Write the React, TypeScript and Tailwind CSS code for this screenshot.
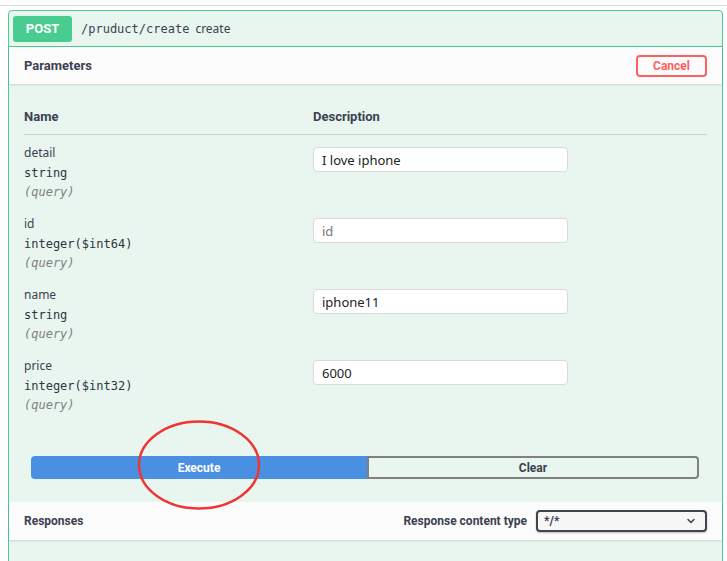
import { ChevronDown } from 'lucide-react';

const params = [
  { name: 'detail', type: 'string', value: 'I love iphone', placeholder: '' },
  { name: 'id', type: 'integer($int64)', value: '', placeholder: 'id' },
  { name: 'name', type: 'string', value: 'iphone11', placeholder: '' },
  { name: 'price', type: 'integer($int32)', value: '6000', placeholder: '' },
];

const ui = "font-['Roboto',sans-serif]";
const mono = "font-['DejaVu_Sans_Mono',monospace]";

export default function App() {
  return (
    <div className={`h-[561px] w-[727px] overflow-hidden bg-white ${ui} text-[#3b4151]`}>
      <div className="h-[5px]" />
      <div className="border-t border-[#d8d8d8]" />

      {/* Operation block */}
      <div className="relative mt-[4px] ml-[8px] mr-[4px] rounded-[4px] border border-[#49cc90] bg-[#e8f6ef] h-[600px]">
        {/* Summary */}
        <div className="flex items-center h-[36px] border-b border-[#49cc90] pl-[4px]">
          <div className="w-[59px] h-[26px] rounded-[3px] bg-[#49cc90] text-white text-[13px] font-bold flex items-center justify-center">
            POST
          </div>
          <span className={`ml-[9px] ${mono} text-[12px] text-[#3b4151]`}>/pruduct/create</span>
          <span className="ml-[6px] text-[12px] font-['Noto_Sans',sans-serif] text-[#3b4151]">create</span>
        </div>

        {/* Parameters header */}
        <div className="flex items-center justify-between h-[37px] bg-[#fcfcfc] shadow-[0_1px_2px_rgba(0,0,0,0.12)] pl-[15px] pr-[15px]">
          <span className="text-[13px] font-bold">Parameters</span>
          <button className="w-[71px] h-[22px] rounded-[4px] border-2 border-[#ff6060] text-[#ff6060] text-[12px] font-bold bg-transparent">
            Cancel
          </button>
        </div>

        {/* Table */}
        <div className="px-[15px] pt-[23px]">
          <div className="flex items-center h-[19px] text-[13px] font-bold">
            <div className="w-[289px]">Name</div>
            <div>Description</div>
          </div>
          <div className="mt-[8px] border-t border-[#c8d3cf]" />

          <div className="pt-[5px]">
            {params.map((p) => (
              <div key={p.name} className="flex h-[71px]">
                <div className="w-[289px] pt-[5px]">
                  <div className="text-[12px] leading-[16px] text-[#3b4151] font-['Noto_Sans',sans-serif]">{p.name}</div>
                  <div className={`mt-[4px] ${mono} text-[12px] leading-[16px] text-[#2f3441]`}>{p.type}</div>
                  <div className={`mt-[3px] ${mono} text-[12px] leading-[16px] italic text-[#808080]`}>(query)</div>
                </div>
                <div className="pt-[7px]">
                  <input
                    readOnly
                    value={p.value}
                    placeholder={p.placeholder}
                    className="w-[255px] h-[25px] rounded-[4px] border border-[#d9d9d9] bg-white px-[8px] text-[13px] font-['Noto_Sans',sans-serif] text-[#222] placeholder:text-[#777] outline-none"
                  />
                </div>
              </div>
            ))}
          </div>
        </div>

        {/* Buttons */}
        <div className="flex mt-[32px] pl-[22px] pr-[23px]">
          <button className="w-[336px] h-[23px] rounded-l-[4px] bg-[#4990e2] text-white text-[12px] font-bold">Execute</button>
          <button className="flex-1 h-[23px] rounded-r-[4px] border-2 border-[#808080] text-[#3b4151] text-[12px] font-bold bg-transparent">
            Clear
          </button>
        </div>

        {/* Responses */}
        <div className="mt-[23px] flex items-center justify-between h-[38px] bg-[#fcfcfc] shadow-[0_1px_2px_rgba(0,0,0,0.12)] pl-[15px] pr-[15px]">
          <span className="text-[12px] font-bold">Responses</span>
          <div className="flex items-center">
            <span className="text-[12px] font-bold mr-[9px]">Response content type</span>
            <div className="w-[171px] h-[22px] rounded-[4px] border-2 border-[#41444e] bg-[#f7f7f7] flex items-center justify-between pl-[6px] pr-[8px] shadow-[0_1px_2px_rgba(0,0,0,0.25)]">
              <span className="text-[12px] font-bold">*/*</span>
              <ChevronDown className="w-[12px] h-[12px]" strokeWidth={3} />
            </div>
          </div>
        </div>

        {/* Annotation ellipse */}
        <svg className="absolute left-[128px] top-[408px] pointer-events-none" width="124" height="92" viewBox="0 0 124 92">
          <ellipse cx="62" cy="46" rx="60" ry="43.5" fill="none" stroke="#ef3535" strokeWidth="2.5" />
        </svg>
      </div>
    </div>
  );
}
